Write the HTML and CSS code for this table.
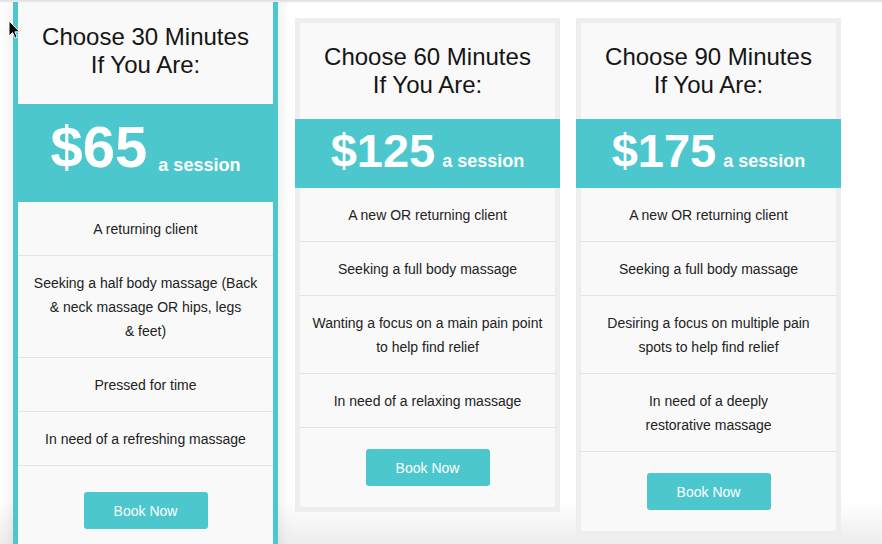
FILE: index.html
```html
<!DOCTYPE html>
<html lang="en">
<head>
<meta charset="utf-8">
<title>Massage Pricing</title>
<link rel="stylesheet" href="styles.css">
</head>
<body>
<div class="top-rule" aria-hidden="true"></div>
<main class="pricing">
  <section class="card featured">
    <h2 class="card-head">Choose 30 Minutes<br>If You Are:</h2>
    <div class="band"><span class="price">$65</span><span class="per">a session</span></div>
    <ul class="features">
      <li>A returning client</li>
      <li>Seeking a half body massage (Back<br>&amp; neck massage OR hips, legs<br>&amp; feet)</li>
      <li>Pressed for time</li>
      <li>In need of a refreshing massage</li>
    </ul>
    <div class="card-foot"><a class="btn" href="#">Book Now</a></div>
  </section>
  <section class="card">
    <h2 class="card-head">Choose 60 Minutes<br>If You Are:</h2>
    <div class="band"><span class="price">$125</span><span class="per">a session</span></div>
    <ul class="features">
      <li>A new OR returning client</li>
      <li>Seeking a full body massage</li>
      <li>Wanting a focus on a main pain point<br>to help find relief</li>
      <li>In need of a relaxing massage</li>
    </ul>
    <div class="card-foot"><a class="btn" href="#">Book Now</a></div>
  </section>
  <section class="card">
    <h2 class="card-head">Choose 90 Minutes<br>If You Are:</h2>
    <div class="band"><span class="price">$175</span><span class="per">a session</span></div>
    <ul class="features">
      <li>A new OR returning client</li>
      <li>Seeking a full body massage</li>
      <li>Desiring a focus on multiple pain<br>spots to help find relief</li>
      <li>In need of a deeply<br>restorative massage</li>
    </ul>
    <div class="card-foot"><a class="btn" href="#">Book Now</a></div>
  </section>
</main>
<svg class="cursor" width="13" height="20" viewBox="0 0 13 20" aria-hidden="true">
  <path d="M1 1 L1 16 L4.6 12.6 L7 18.2 L9.2 17.2 L6.9 11.8 L11.6 11.8 Z" fill="#000" stroke="#fff" stroke-width="1" stroke-linejoin="round"/>
</svg>
</body>
</html>
```

FILE: styles.css
```css
html, body {
  margin: 0;
  height: 544px;
  overflow: hidden;
}

body {
  font-family: "Liberation Sans", Arial, Helvetica, sans-serif;
  color: #222;
  background: linear-gradient(to bottom, #ffffff 0, #ffffff 500px, #ededed 544px);
  position: relative;
}

.top-rule {
  position: absolute;
  left: 0;
  right: 0;
  top: 0;
  height: 2px;
  background: linear-gradient(to bottom, #dcdcdc, #eeeeee);
  box-shadow: 0 1px 2px rgba(0, 0, 0, 0.04);
  z-index: 2;
}

.pricing {
  display: flex;
  align-items: flex-start;
  gap: 16px;
  padding: 18px 0 0 13px;
}

.card {
  width: 265px;
  box-sizing: border-box;
  border: 5px solid #eeeeee;
  background: #f9f9f9;
  flex: none;
}

.card.featured {
  border-color: #4cc7cd;
  border-top-width: 0;
  margin-top: -20px;
  margin-right: 1px;
  box-shadow: 0 0 14px rgba(0, 0, 0, 0.10);
}

.card-head {
  margin: 0;
  padding: 20px 10px 21px;
  font-size: 24px;
  line-height: 27.5px;
  font-weight: normal;
  text-align: center;
  color: #151515;
}

.featured .card-head {
  padding: 25px 10px 26px;
}

.band {
  margin: 0 -5px;
  background: #4cc7cd;
  color: #fff;
  font-weight: bold;
  display: flex;
  justify-content: center;
  align-items: baseline;
  padding: 4px 0 10px;
  white-space: nowrap;
}

.price {
  font-size: 47px;
  line-height: 55px;
}

.per {
  font-size: 18px;
  line-height: 20px;
  margin-left: 7px;
}

.featured .band {
  padding: 10px 0 23px;
}

.featured .price {
  font-size: 58px;
  line-height: 65px;
}

.featured .per {
  margin-left: 11px;
  transform: translateY(4px);
}

.features {
  list-style: none;
  margin: 0;
  padding: 0;
}

.features li {
  padding: 15px 8px 14px;
  border-bottom: 1px solid #e3e3e3;
  font-size: 14px;
  line-height: 24px;
  text-align: center;
  color: #222;
}

.card-foot {
  display: flex;
  justify-content: center;
  padding: 21px 0;
}

.featured .card-foot {
  padding: 26px 0;
}

.btn {
  display: flex;
  align-items: center;
  justify-content: center;
  width: 124px;
  height: 37px;
  border-radius: 3px;
  background: #4cc7cd;
  color: #fff;
  font-size: 14px;
  text-decoration: none;
}

.cursor {
  position: absolute;
  left: 8px;
  top: 20px;
  z-index: 3;
}
```
